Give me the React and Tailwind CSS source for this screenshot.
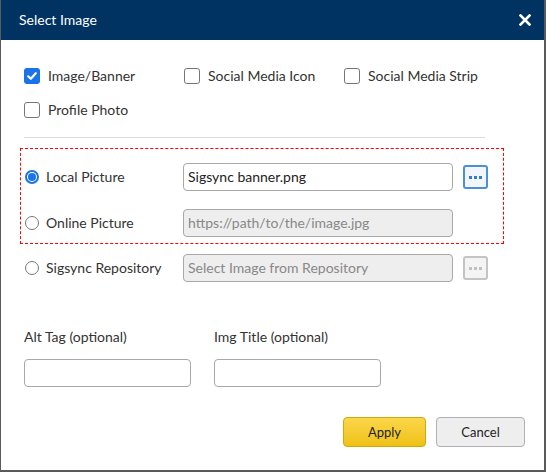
import React from 'react';

const Check = ({ checked, label }) => (
    <label className="flex items-center gap-[8px]">
        {checked ? (
            <span className="w-[16px] h-[16px] rounded-[3px] bg-[#1a73e8] flex items-center justify-center">
                <svg width="12" height="12" viewBox="0 0 12 12">
                    <path d="M2.2 6.3 L4.8 8.8 L9.8 3.2" fill="none" stroke="white" strokeWidth="2.2" strokeLinecap="round" strokeLinejoin="round" />
                </svg>
            </span>
        ) : (
            <span className="w-[16px] h-[16px] rounded-[3px] border border-[#767676] bg-white" />
        )}
        <span>{label}</span>
    </label>
);

const Radio = ({ checked, label }) => (
    <label className="flex items-center gap-[7px] w-[158px]">
        {checked ? (
            <span className="w-[14px] h-[14px] rounded-full border-2 border-[#1a73e8] flex items-center justify-center">
                <span className="w-[8px] h-[8px] rounded-full bg-[#1a73e8]" />
            </span>
        ) : (
            <span className="w-[14px] h-[14px] rounded-full border border-[#767676] bg-white" />
        )}
        <span>{label}</span>
    </label>
);

const Dots = ({ active }) => (
    <button className={`w-[25px] h-[24px] rounded-[3px] border-2 flex items-center justify-center gap-[2px] ${active ? 'border-[#4a90d9] bg-[#f2f6fb]' : 'border-[#c4c4c4] bg-[#f4f4f4]'}`}>
        <span className={`w-[3px] h-[3px] ${active ? 'bg-[#2f7fd1]' : 'bg-[#c0c0c0]'}`} />
        <span className={`w-[3px] h-[3px] ${active ? 'bg-[#2f7fd1]' : 'bg-[#c0c0c0]'}`} />
        <span className={`w-[3px] h-[3px] ${active ? 'bg-[#2f7fd1]' : 'bg-[#c0c0c0]'}`} />
    </button>
);

const App = () => {
    return (
        <div className="w-[546px] h-[472px] bg-white border-l border-r-2 border-b-2 border-[#5a5a5a] font-['Lato','Open_Sans',sans-serif] text-[14px] leading-[20px] text-[#333] flex flex-col">
            <div className="h-[40px] bg-[#003262] flex items-center justify-between pl-[18px] pr-[13px] text-white shrink-0">
                <span className="text-[14px]">Select Image</span>
                <svg width="12" height="12" viewBox="0 0 12 12">
                    <path d="M1.5 1.5 L10.5 10.5 M10.5 1.5 L1.5 10.5" stroke="white" strokeWidth="2.6" strokeLinecap="square" />
                </svg>
            </div>

            <div className="pl-[23px] pr-[60px] pt-[26px]">
                <div className="grid grid-cols-[160px_160px_160px] gap-y-[14px]">
                    <Check checked label="Image/Banner" />
                    <Check label="Social Media Icon" />
                    <Check label="Social Media Strip" />
                    <Check label="Profile Photo" />
                </div>
                <div className="h-px bg-[#dcdcdc] mt-[17px] w-[461px]" />
            </div>

            <div className="ml-[19px] mt-[10px] w-[484px] border border-dashed border-[#ff0000] pt-[14px] pb-[6px] pl-[4px] flex flex-col gap-[18px]">
                <div className="flex items-center h-[28px]">
                    <Radio checked label="Local Picture" />
                    <div className="w-[270px] h-[28px] border border-[#a8a8a8] rounded-[4px] px-[4px] flex items-center text-[#222]">Sigsync banner.png</div>
                    <div className="ml-[10px]"><Dots active /></div>
                </div>
                <div className="flex items-center h-[28px]">
                    <Radio label="Online Picture" />
                    <div className="w-[270px] h-[28px] border border-[#a8a8a8] bg-[#eeeeee] rounded-[4px] px-[4px] flex items-center text-[#888]">https://path/to/the/image.jpg</div>
                </div>
            </div>

            <div className="flex items-center h-[28px] ml-[24px] mt-[10px]">
                <Radio label="Sigsync Repository" />
                <div className="w-[270px] h-[28px] border border-[#a8a8a8] bg-[#eeeeee] rounded-[4px] px-[4px] flex items-center text-[#888]">Select Image from Repository</div>
                <div className="ml-[10px]"><Dots /></div>
            </div>

            <div className="flex gap-[23px] ml-[23px] mt-[45px]">
                <div className="flex flex-col">
                    <span>Alt Tag (optional)</span>
                    <div className="mt-[12px] w-[167px] h-[28px] border border-[#a8a8a8] rounded-[4px]" />
                </div>
                <div className="flex flex-col">
                    <span>Img Title (optional)</span>
                    <div className="mt-[12px] w-[167px] h-[28px] border border-[#a8a8a8] rounded-[4px]" />
                </div>
            </div>

            <div className="flex justify-end gap-[10px] mr-[19px] mt-[30px]">
                <button className="w-[83px] h-[30px] rounded-[4px] border border-[#d1a80e] bg-gradient-to-b from-[#fbd648] to-[#efc113] text-[13px] text-[#222]">Apply</button>
                <button className="w-[89px] h-[30px] rounded-[4px] border border-[#b0b0b0] bg-[#eeeeee] text-[13px] text-[#222]">Cancel</button>
            </div>
        </div>
    );
};

export default App;
